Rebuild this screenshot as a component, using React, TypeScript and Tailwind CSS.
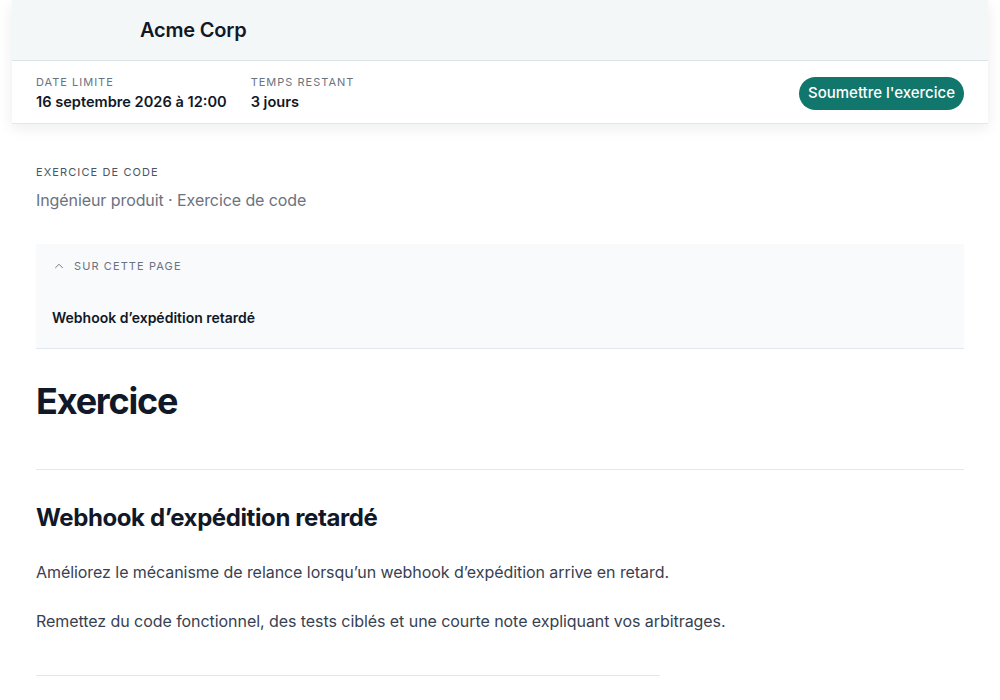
import { ChevronUp } from "lucide-react"

const font = { fontFamily: "Inter, 'Noto Sans', sans-serif" }

export default function App() {
  return (
    <div className="min-h-screen bg-white text-[#111827]" style={font}>
      {/* Sticky header card */}
      <div className="mx-[12px] bg-white shadow-[0_4px_14px_rgba(15,23,42,0.08)]">
        <div className="h-[61px] bg-[#f4f7f8] border-b border-[#dde3e8] flex items-center pl-[128px]">
          <span className="text-[20px] font-semibold tracking-[-0.2px] text-[#111827]">Acme Corp</span>
        </div>
        <div className="h-[63px] border-b border-[#e5e7eb] flex items-center justify-between px-[24px] pt-[2px]">
          <div className="flex gap-[24px]">
            <div className="flex flex-col">
              <span className="text-[11px] uppercase tracking-[1px] text-[#6b7280] leading-[14px]">Date limite</span>
              <span className="text-[14.6px] font-semibold text-[#111827] leading-[20px] mt-[3px]">16 septembre 2026 à 12:00</span>
            </div>
            <div className="flex flex-col">
              <span className="text-[11px] uppercase tracking-[1px] text-[#6b7280] leading-[14px]">Temps restant</span>
              <span className="text-[14.6px] font-semibold text-[#111827] leading-[20px] mt-[3px]">3 jours</span>
            </div>
          </div>
          <button className="h-[33px] px-[9px] rounded-full bg-[#11766c] text-white text-[15px] font-medium">
            Soumettre l'exercice
          </button>
        </div>
      </div>

      <div className="px-[36px]">
        <div className="pt-[40px]">
          <div className="text-[11px] uppercase tracking-[1.1px] text-[#4b5563] leading-[16px]">Exercice de code</div>
          <div className="text-[16px] tracking-[-0.08px] text-[#6b7280] leading-[24px] mt-[8px]">Ingénieur produit · Exercice de code</div>
        </div>

        <div className="mt-[32px] bg-[#f8fafc] border-b border-[#e2e8f0] px-[16px] pt-[14px] pb-[20px]">
          <div className="flex items-center gap-[8px] text-[#6b7280]">
            <ChevronUp size={14} strokeWidth={1.6} />
            <span className="text-[11px] uppercase tracking-[1.1px] leading-[16px]">Sur cette page</span>
          </div>
          <div className="mt-[34px] text-[14px] font-semibold text-[#111827] leading-[20px]">Webhook d’expédition retardé</div>
        </div>

        <h1 className="mt-[30px] text-[36px] font-bold tracking-[-1.2px] leading-[44px] text-[#111827]">Exercice</h1>
        <div className="mt-[46px] border-t border-[#e5e7eb]" />

        <h2 className="mt-[32px] text-[24px] font-bold tracking-[-0.4px] leading-[32px] text-[#111827]">Webhook d’expédition retardé</h2>
        <p className="mt-[26px] text-[16px] tracking-[-0.06px] leading-[24px] text-[#374151]">
          Améliorez le mécanisme de relance lorsqu’un webhook d’expédition arrive en retard.
        </p>
        <p className="mt-[25px] text-[16px] tracking-[-0.06px] leading-[24px] text-[#374151]">
          Remettez du code fonctionnel, des tests ciblés et une courte note expliquant vos arbitrages.
        </p>
        <div className="mt-[42px] w-[624px] border-t border-[#e5e7eb]" />
        <div className="h-[40px]" />
      </div>
    </div>
  )
}
